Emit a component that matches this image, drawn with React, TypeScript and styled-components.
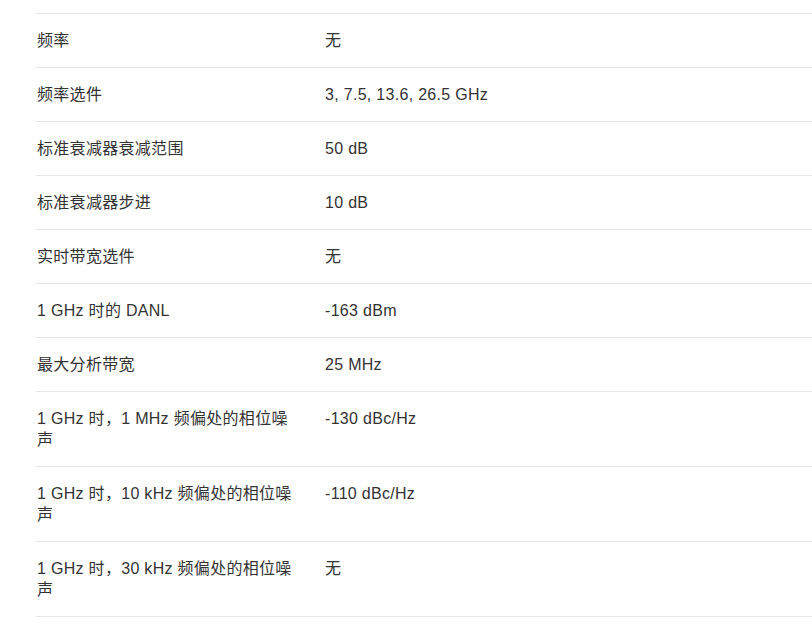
import React from 'react';
import styled, { createGlobalStyle } from 'styled-components';

const GlobalStyle = createGlobalStyle`
    html, body {
        margin:0;
        padding:0;
        background:#fff;
    }
    body{
        font-family:"Liberation Sans", Arial, "Noto Sans CJK SC", sans-serif;
        color:#333;
    }
`;

const specs: [string, string][] = [
    ['频率', '无'],
    ['频率选件', '3, 7.5, 13.6, 26.5 GHz'],
    ['标准衰减器衰减范围', '50 dB'],
    ['标准衰减器步进', '10 dB'],
    ['实时带宽选件', '无'],
    ['1 GHz 时的 DANL', '-163 dBm'],
    ['最大分析带宽', '25 MHz'],
    ['1 GHz 时，1 MHz 频偏处的相位噪声', '-130 dBc/Hz'],
    ['1 GHz 时，10 kHz 频偏处的相位噪声', '-110 dBc/Hz'],
    ['1 GHz 时，30 kHz 频偏处的相位噪声', '无'],
];

export default function App() {
    return (
        <>
            <GlobalStyle />
            <Page>
                <Table>
                    {specs.map(([label, value]) => (
                        <Row key={label}>
                            <Label>{label}</Label>
                            <Value>{value}</Value>
                        </Row>
                    ))}
                </Table>
            </Page>
        </>
    );
}

const Page = styled.div`
    padding:13px 0 0 36px;
`;

const Table = styled.div`
    display:flex;
    flex-direction:column;
    border-top:1px solid #e6e6e6;
`;

const Row = styled.div`
    display:grid;
    grid-template-columns:288px 1fr;
    border-bottom:1px solid #e6e6e6;
`;

const Cell = styled.div`
    padding:16px 0 16px 1px;
    font-size:16px;
    line-height:21px;
    letter-spacing:0.3px;
`;

const Label = styled(Cell)`
    padding-right:22px;
`;

const Value = styled(Cell)``;
